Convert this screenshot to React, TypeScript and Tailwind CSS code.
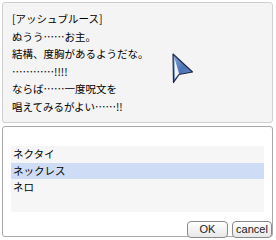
import React from 'react';

const lines = [
  '[アッシュブルース]',
  'ぬうう……お主。',
  '結構、度胸があるようだな。',
  '…………!!!!',
  'ならば……一度呪文を',
  '唱えてみるがよい……!!',
];

const items = ['ネクタイ', 'ネックレス', 'ネロ'];

function NextArrow() {
  return (
    <svg width="24" height="32" viewBox="0 0 24 32">
      <defs>
        <linearGradient id="arrowFill" x1="0" y1="0" x2="1" y2="1">
          <stop offset="0" stopColor="#8aa6d8" />
          <stop offset="0.5" stopColor="#4d72b6" />
          <stop offset="1" stopColor="#6f8fc8" />
        </linearGradient>
      </defs>
      <path d="M2 1 L21.5 19 L8 21.5 L2.5 29.5 Z" fill="url(#arrowFill)" stroke="#1d2a44" strokeWidth="1.2" strokeLinejoin="round" />
      <path d="M3.5 5 L8 20.5 L3.8 26 Z" fill="#ffffff" opacity="0.9" />
    </svg>
  );
}

export default function App() {
  return (
    <div className="w-[276px] h-[240px] bg-white flex flex-col pt-[2px] px-[2px] gap-[3px] font-['Noto_Sans_CJK_JP',sans-serif] text-black">
      <div className="relative h-[121px] w-[271px] rounded-[3px] border border-[#d0d0d0] bg-[#f4f4f4] pl-[9px] pt-[7px]">
        {lines.map((l, i) => (
          <div key={i} className="text-[10.5px] leading-[17.5px] whitespace-nowrap">
            {l}
          </div>
        ))}
        <div className="absolute left-[168px] top-[50px]">
          <NextArrow />
        </div>
      </div>
      <div className="relative h-[111px] w-[271px] rounded-[3px] border border-[#a9a9a9] bg-white">
        <div className="mx-[8px] mt-[19px] h-[66px] bg-[#f6f6f6]">
          {items.map((it, i) => (
            <div
              key={i}
              className={
                'h-[16.5px] pl-[2px] text-[10.5px] leading-[16.5px] ' +
                (i === 1 ? 'bg-[#cfdcf5]' : '')
              }
            >
              {it}
            </div>
          ))}
        </div>
        <div className="absolute right-[0px] bottom-[-2px] flex gap-[4px]">
          <button className="h-[17px] w-[41px] rounded-[4px] border border-[#8a8a8a] bg-gradient-to-b from-white to-[#e8e8e8] text-[11px] leading-[15px] text-[#222] font-['Liberation_Sans',sans-serif]">
            OK
          </button>
          <button className="h-[17px] w-[40px] rounded-[4px] border border-[#8a8a8a] bg-gradient-to-b from-white to-[#e8e8e8] text-[11px] leading-[15px] text-[#222] font-['Liberation_Sans',sans-serif]">
            cancel
          </button>
        </div>
      </div>
    </div>
  );
}
